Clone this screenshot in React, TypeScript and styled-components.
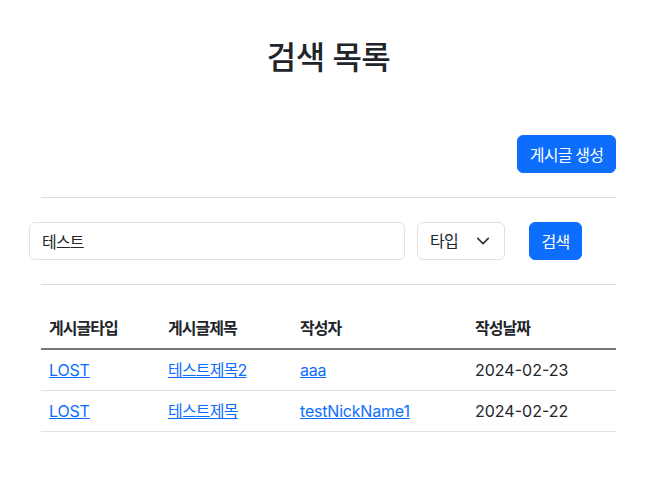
import React from 'react';
import styled, { createGlobalStyle } from 'styled-components';

const GlobalStyle = createGlobalStyle`
  body {
    margin: 0;
    background: #fff;
    color: #212529;
    font-family: Inter, "Noto Sans CJK KR", sans-serif;
    font-size: 16px;
    line-height: 1.5;
  }
`;

const Page = styled.div`
  padding: 39px 40px 40px 41px;
`;

const Title = styled.h1`
  margin: 0;
  text-align: center;
  font-size: 32px;
  font-weight: 500;
  line-height: 38px;
  letter-spacing: -0.6px;
`;

const TopBar = styled.div`
  display: flex;
  justify-content: flex-end;
  margin-top: 58px;
`;

const Button = styled.button<{ $width?: number }>`
  height: 38px;
  padding: 0;
  width: ${p => (p.$width ? `${p.$width}px` : 'auto')};
  white-space: nowrap;
  border: 1px solid #0d6efd;
  border-radius: 6px;
  background: #0d6efd;
  color: #fff;
  font-family: inherit;
  font-size: 16px;
  letter-spacing: -0.8px;
  cursor: pointer;
`;

const Divider = styled.hr<{ $after?: number }>`
  margin: 24px 0 ${p => p.$after ?? 24}px;
  border: 0;
  border-top: 1px solid #dedede;
`;

const SearchRow = styled.form`
  display: flex;
  align-items: center;
  margin: 0 -12px;
`;

const Input = styled.input`
  box-sizing: border-box;
  width: 376px;
  height: 38px;
  padding: 6px 12px;
  border: 1px solid #dee2e6;
  border-radius: 6px;
  font-family: inherit;
  font-size: 16px;
  letter-spacing: -0.8px;
  color: #212529;
`;

const SelectBox = styled.div`
  box-sizing: border-box;
  display: flex;
  align-items: center;
  justify-content: space-between;
  width: 88px;
  height: 38px;
  margin: 0 24px 0 12px;
  padding: 0 14px 0 12px;
  border: 1px solid #dee2e6;
  border-radius: 6px;
  letter-spacing: -0.8px;
`;

const Table = styled.table`
  width: 100%;
  table-layout: fixed;
  border-collapse: collapse;
`;

const Th = styled.th<{ $w: number }>`
  box-sizing: border-box;
  width: ${p => p.$w}px;
  padding: 8px;
  text-align: left;
  font-weight: 700;
  letter-spacing: -1px;
  border-bottom: 2px solid #777;
`;

const Td = styled.td`
  padding: 8px;
  border-bottom: 1px solid #dee2e6;
`;

const Link = styled.a<{ $ko?: boolean }>`
  color: #0d6efd;
  text-decoration: underline;
  letter-spacing: ${p => (p.$ko ? '-0.8px' : '-0.2px')};
`;

const rows = [
  { type: 'LOST', title: '테스트제목2', writer: 'aaa', date: '2024-02-23' },
  { type: 'LOST', title: '테스트제목', writer: 'testNickName1', date: '2024-02-22' },
];

export default function App() {
  return (
    <Page>
      <GlobalStyle />
      <Title>검색 목록</Title>
      <TopBar>
        <Button $width={99}>게시글 생성</Button>
      </TopBar>
      <Divider />
      <SearchRow onSubmit={e => e.preventDefault()}>
        <Input defaultValue="테스트" />
        <SelectBox>
          <span>타입</span>
          <svg width="14" height="14" viewBox="0 0 16 16" fill="none">
            <path d="M2 5l6 6 6-6" stroke="#343a40" strokeWidth="2" strokeLinecap="round" strokeLinejoin="round" />
          </svg>
        </SelectBox>
        <Button $width={53}>검색</Button>
      </SearchRow>
      <Divider $after={23} />
      <Table>
        <thead>
          <tr>
            <Th $w={119}>게시글타입</Th>
            <Th $w={132}>게시글제목</Th>
            <Th $w={175}>작성자</Th>
            <Th $w={149}>작성날짜</Th>
          </tr>
        </thead>
        <tbody>
          {rows.map((r, i) => (
            <tr key={i}>
              <Td><Link href="#">{r.type}</Link></Td>
              <Td><Link href="#" $ko>{r.title}</Link></Td>
              <Td><Link href="#">{r.writer}</Link></Td>
              <Td>{r.date}</Td>
            </tr>
          ))}
        </tbody>
      </Table>
    </Page>
  );
}
